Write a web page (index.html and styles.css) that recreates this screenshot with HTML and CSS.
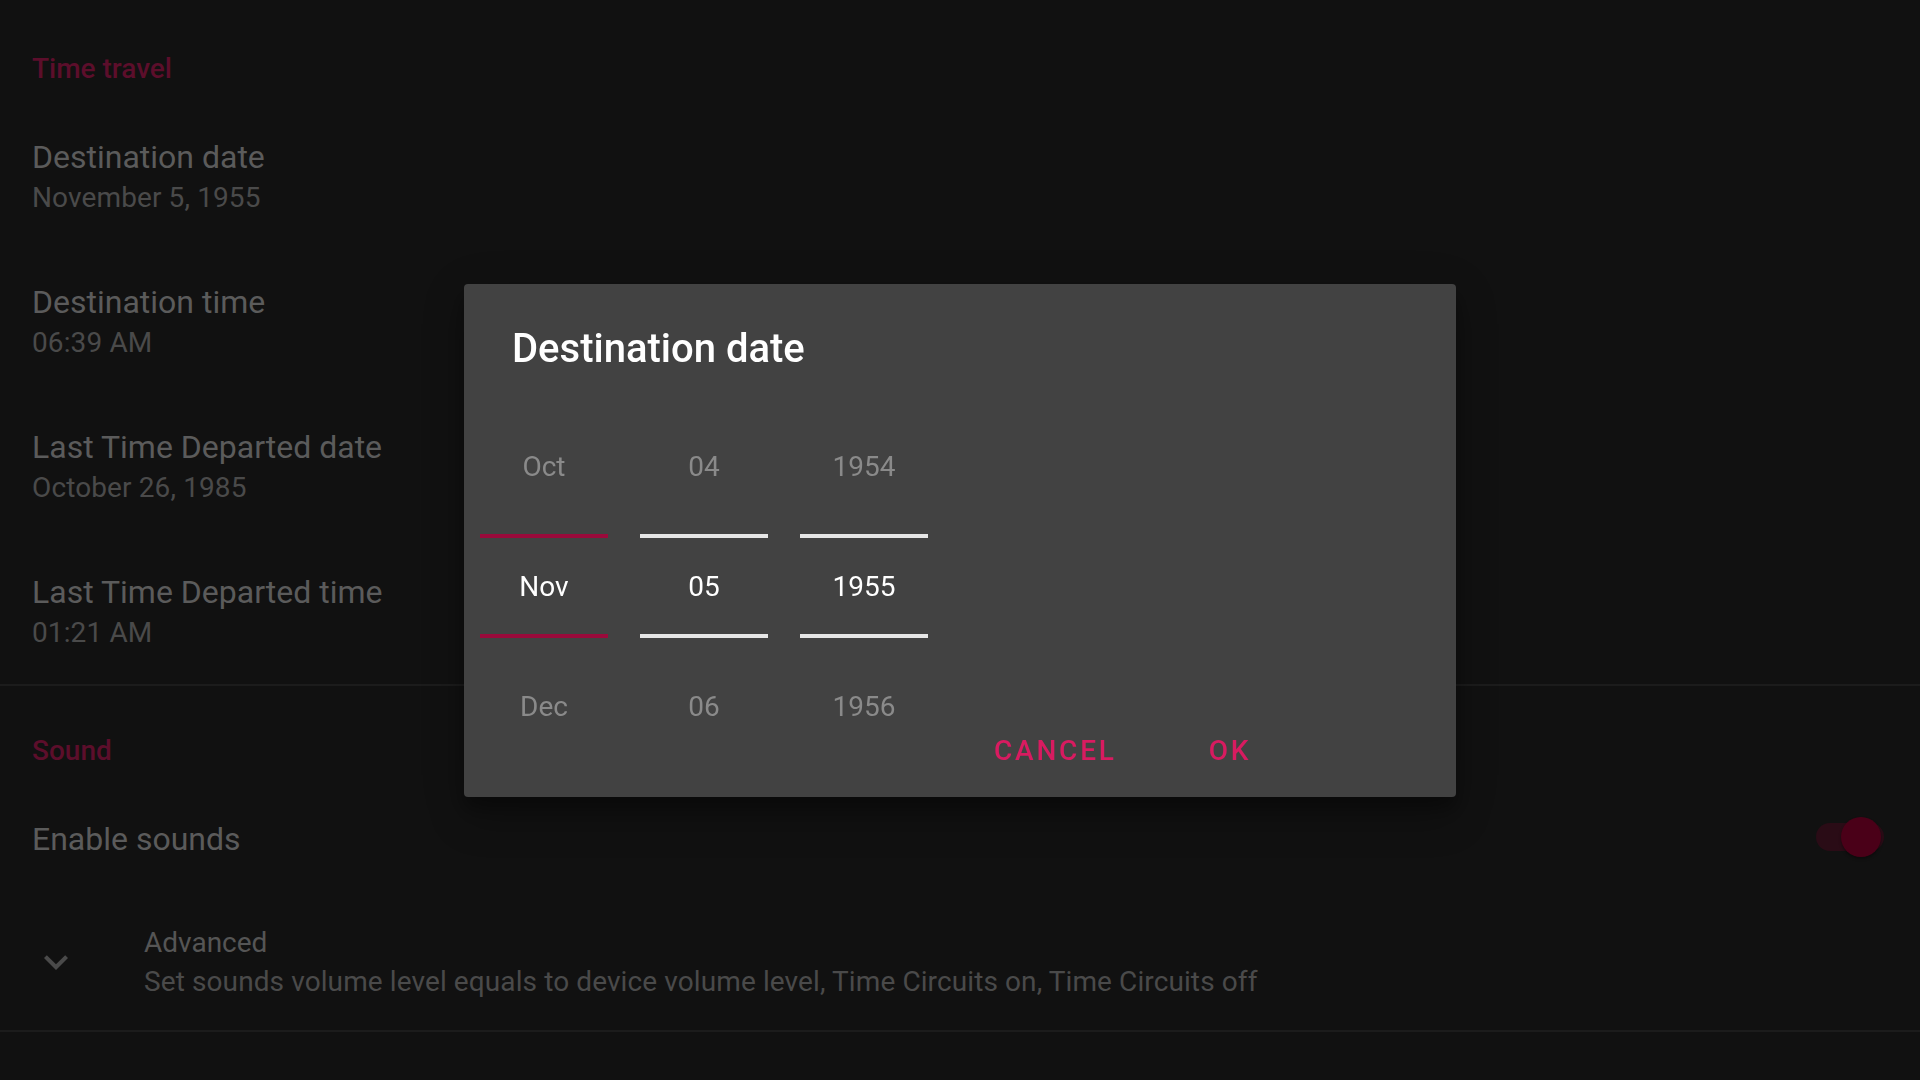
FILE: index.html
```html
<!DOCTYPE html>
<html lang="en">
<head>
<meta charset="utf-8">
<title>Settings</title>
<link rel="stylesheet" href="styles.css">
</head>
<body>
<main class="prefs">
  <section class="section">
    <h2 class="category">Time travel</h2>
    <div class="item">
      <div class="item-title">Destination date</div>
      <div class="item-summary">November 5, 1955</div>
    </div>
    <div class="item">
      <div class="item-title">Destination time</div>
      <div class="item-summary">06:39 AM</div>
    </div>
    <div class="item">
      <div class="item-title">Last Time Departed date</div>
      <div class="item-summary">October 26, 1985</div>
    </div>
    <div class="item">
      <div class="item-title">Last Time Departed time</div>
      <div class="item-summary">01:21 AM</div>
    </div>
  </section>
  <hr class="divider">
  <section class="section">
    <h2 class="category">Sound</h2>
    <div class="item item-switch">
      <div class="item-title">Enable sounds</div>
      <div class="switch">
        <span class="switch-track"></span>
        <span class="switch-thumb"></span>
      </div>
    </div>
    <div class="item item-advanced">
      <div class="icon-frame">
        <svg class="chevron" viewBox="0 0 24 24" width="48" height="48" aria-hidden="true">
          <path d="M16.59 8.59L12 13.17 7.41 8.59 6 10l6 6 6-6z" fill="currentColor"/>
        </svg>
      </div>
      <div class="adv-text">
        <div class="adv-title">Advanced</div>
        <div class="adv-summary">Set sounds volume level equals to device volume level, Time Circuits on, Time Circuits off</div>
      </div>
    </div>
  </section>
  <hr class="divider">
</main>

<div class="overlay">
  <div class="dialog" role="dialog">
    <h1 class="dialog-title">Destination date</h1>
    <div class="dialog-body">
      <div class="picker">
        <div class="picker-col">
          <div class="cell">Oct</div>
          <div class="cell cell-selected cell-accent">Nov</div>
          <div class="cell">Dec</div>
        </div>
        <div class="picker-col">
          <div class="cell">04</div>
          <div class="cell cell-selected">05</div>
          <div class="cell">06</div>
        </div>
        <div class="picker-col">
          <div class="cell">1954</div>
          <div class="cell cell-selected">1955</div>
          <div class="cell">1956</div>
        </div>
      </div>
      <div class="buttons">
        <button class="btn" type="button">Cancel</button>
        <button class="btn" type="button">OK</button>
      </div>
    </div>
  </div>
</div>
</body>
</html>
```

FILE: styles.css
```css
* {
  box-sizing: border-box;
}

html, body {
  margin: 0;
  padding: 0;
  height: 100%;
}

body {
  background: #111111;
  font-family: Roboto, "Noto Sans", sans-serif;
  overflow: hidden;
}

.prefs {
  padding-top: 4px;
}

.section {
  display: flex;
  flex-direction: column;
}

.category {
  margin: 0;
  padding: 45px 32px 15px;
  font-size: 28px;
  line-height: 40px;
  font-weight: 500;
  color: #5c0e2b;
}

.item {
  padding: 32px 32px 31px;
}

.item-title {
  font-size: 32px;
  line-height: 42px;
  color: #5b5b5b;
}

.item-summary {
  font-size: 28px;
  line-height: 40px;
  letter-spacing: 0.12px;
  color: #4a4a4a;
}

.item-switch {
  display: flex;
  align-items: center;
  justify-content: space-between;
  padding: 32px 36px 32px 32px;
}

.switch {
  position: relative;
  width: 68px;
  height: 40px;
  margin-top: -4px;
}

.switch-track {
  position: absolute;
  left: 0;
  top: 6px;
  width: 68px;
  height: 28px;
  border-radius: 14px;
  background: #2a0c16;
}

.switch-thumb {
  position: absolute;
  left: 25px;
  top: 0;
  width: 40px;
  height: 40px;
  border-radius: 50%;
  background: #4a0018;
  box-shadow: 0 2px 3px rgba(0, 0, 0, 0.35);
}

.item-advanced {
  display: flex;
  align-items: center;
  padding: 31px 32px 29px;
}

.icon-frame {
  width: 112px;
  flex: none;
  display: flex;
  align-items: center;
}

.chevron {
  display: block;
  color: #4a4a4a;
}

.adv-title,
.adv-summary {
  font-size: 28px;
  line-height: 39px;
  color: #555555;
}

.adv-summary {
  letter-spacing: 0.1px;
  color: #4a4a4a;
}

.divider {
  margin: 0;
  border: 0;
  height: 2px;
  background: #1c1c1c;
}

/* Dialog */
.overlay {
  position: fixed;
  inset: 0;
  display: flex;
  align-items: center;
  justify-content: center;
}

.dialog {
  width: 992px;
  height: 513px;
  background: #424242;
  border-radius: 4px;
  box-shadow: 0 11px 15px rgba(0, 0, 0, 0.25), 0 24px 38px rgba(0, 0, 0, 0.18), 0 9px 46px rgba(0, 0, 0, 0.15);
  padding-top: 40px;
  display: flex;
  flex-direction: column;
}

.dialog-title {
  margin: 0;
  padding-left: 48px;
  font-size: 40px;
  line-height: 50px;
  font-weight: 500;
  color: #ffffff;
}

.dialog-body {
  margin-top: 33px;
  padding-left: 16px;
  display: flex;
  align-items: flex-end;
}

.picker {
  display: flex;
  gap: 32px;
}

.picker-col {
  width: 128px;
  display: flex;
  flex-direction: column;
}

.cell {
  height: 120px;
  display: flex;
  align-items: center;
  justify-content: center;
  font-size: 28px;
  color: #8a8a8a;
}

.cell-selected {
  height: 104px;
  margin: 7px 0 9px;
  padding-top: 2px;
  border-top: 4px solid #e6e6e6;
  border-bottom: 4px solid #e6e6e6;
  color: #ffffff;
}

.cell-accent {
  border-color: #9a0a3b;
}

.buttons {
  display: flex;
  margin-left: 50px;
  gap: 60px;
}

.btn {
  background: none;
  border: 0;
  padding: 0 16px;
  margin: 0;
  font-family: Roboto, "Noto Sans", sans-serif;
  font-size: 28px;
  line-height: 32px;
  font-weight: 500;
  letter-spacing: 0.1em;
  text-transform: uppercase;
  color: #d81b60;
}
```
